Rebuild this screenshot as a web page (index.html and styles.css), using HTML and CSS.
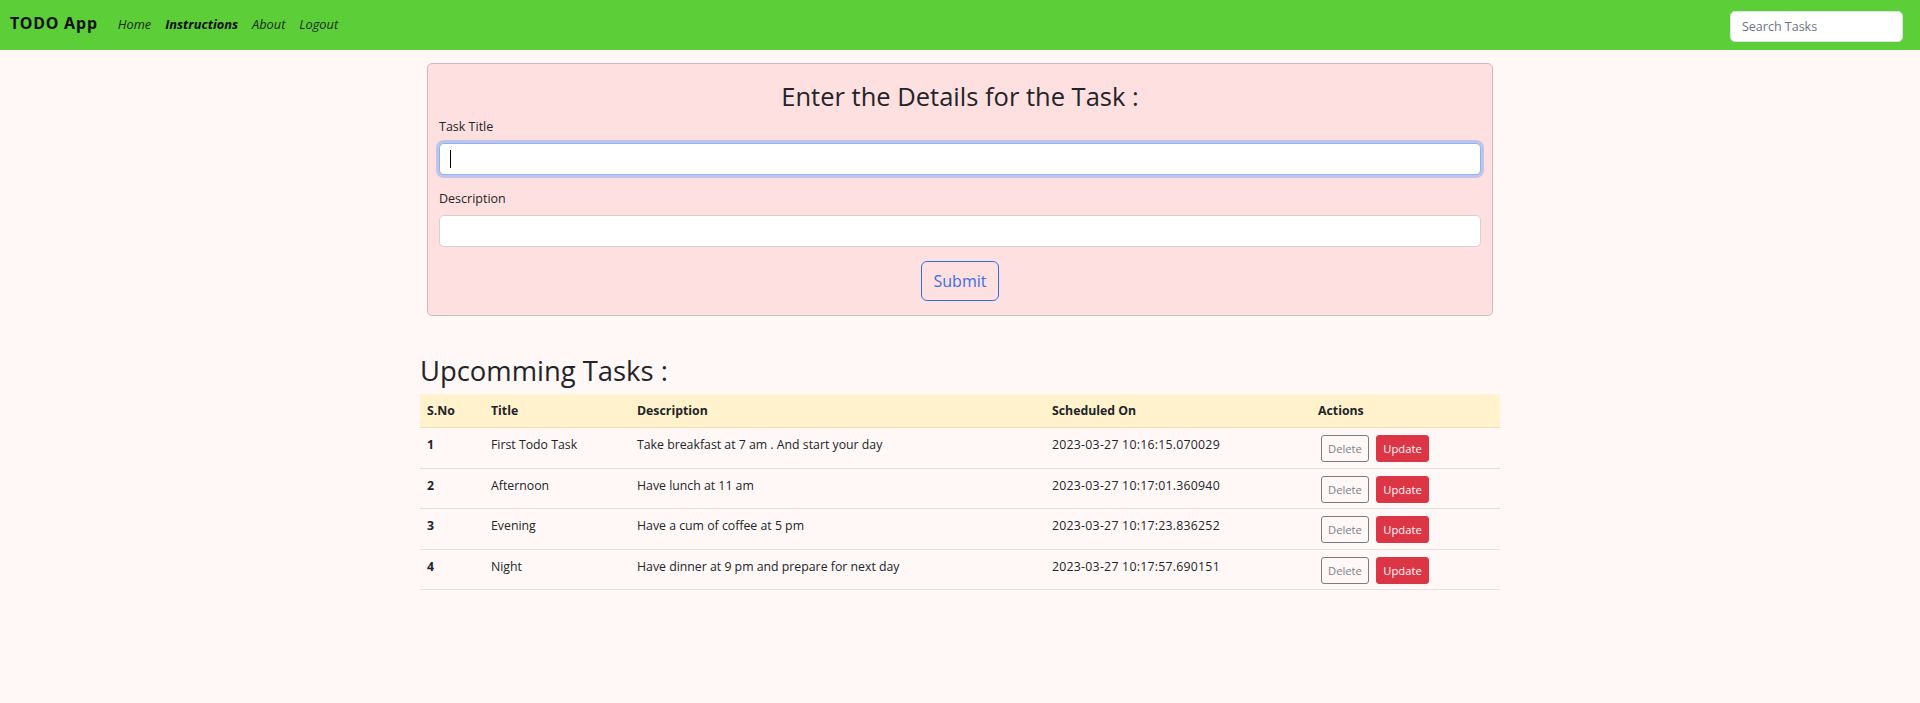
FILE: index.html
```html
<!DOCTYPE html>
<html lang="en">
<head>
<meta charset="utf-8">
<title>TODO App</title>
<link rel="stylesheet" href="styles.css">
</head>
<body>
<nav class="navbar">
  <div class="nav-left">
    <a class="brand" href="#">TODO App</a>
    <ul class="nav-links">
      <li><a href="#">Home</a></li>
      <li><a class="active" href="#">Instructions</a></li>
      <li><a href="#">About</a></li>
      <li><a href="#">Logout</a></li>
    </ul>
  </div>
  <form class="search">
    <input class="search-input" type="search" placeholder="Search Tasks">
  </form>
</nav>

<main class="container">
  <form class="task-form">
    <h3 class="form-title">Enter the Details for the Task :</h3>
    <div class="field">
      <label class="form-label" for="title">Task Title</label>
      <div class="input-wrap">
        <input class="form-control focused" id="title" type="text">
        <span class="caret"></span>
      </div>
    </div>
    <div class="field">
      <label class="form-label" for="desc">Description</label>
      <input class="form-control" id="desc" type="text">
    </div>
    <div class="submit-row">
      <button class="btn-submit" type="button">Submit</button>
    </div>
  </form>

  <h2 class="section-title">Upcomming Tasks :</h2>
  <table class="tasks">
    <colgroup>
      <col class="c-sno"><col class="c-title"><col class="c-desc"><col class="c-date"><col class="c-act">
    </colgroup>
    <thead>
      <tr><th>S.No</th><th>Title</th><th>Description</th><th>Scheduled On</th><th>Actions</th></tr>
    </thead>
    <tbody>
      <tr><th>1</th><td>First Todo Task</td><td>Take breakfast at 7 am . And start your day</td><td class="date">2023-03-27 10:16:15.070029</td><td class="acts"><div class="act-btns"><button class="btn-del">Delete</button><button class="btn-upd">Update</button></div></td></tr>
      <tr><th>2</th><td>Afternoon</td><td>Have lunch at 11 am</td><td class="date">2023-03-27 10:17:01.360940</td><td class="acts"><div class="act-btns"><button class="btn-del">Delete</button><button class="btn-upd">Update</button></div></td></tr>
      <tr><th>3</th><td>Evening</td><td>Have a cum of coffee at 5 pm</td><td class="date">2023-03-27 10:17:23.836252</td><td class="acts"><div class="act-btns"><button class="btn-del">Delete</button><button class="btn-upd">Update</button></div></td></tr>
      <tr><th>4</th><td>Night</td><td>Have dinner at 9 pm and prepare for next day</td><td class="date">2023-03-27 10:17:57.690151</td><td class="acts"><div class="act-btns"><button class="btn-del">Delete</button><button class="btn-upd">Update</button></div></td></tr>
    </tbody>
  </table>
</main>
</body>
</html>
```
FILE: styles.css
```css
* { box-sizing: border-box; }
html, body { margin: 0; padding: 0; }
body {
  background: #fff8f7;
  color: #212529;
  font-family: "Open Sans", "Noto Sans", sans-serif;
  font-size: 12.3px;
  line-height: 1.55;
}

/* navbar */
.navbar {
  height: 50px;
  background: #5bce38;
  display: flex;
  align-items: center;
  justify-content: space-between;
  padding: 0 17px 0 10px;
}
.nav-left { display: flex; align-items: center; }
.brand {
  font-family: "Noto Sans", sans-serif;
  font-weight: 700;
  font-size: 16px;
  letter-spacing: 0.8px;
  color: #111;
  text-decoration: none;
  margin-right: 20px;
  margin-top: -3px;
}
.nav-links { list-style: none; display: flex; margin: 0; padding: 0; gap: 14px; }
.nav-links a {
  font-style: italic;
  font-size: 12.8px;
  color: #1d2a1a;
  text-decoration: none;
}
.nav-links a.active { font-weight: 700; color: #0d0d0d; }
.search { margin-top: 2px; }
.search-input {
  width: 173px;
  height: 31px;
  border: 1px solid #dee2e6;
  border-radius: 5px;
  background: #fff;
  padding: 4px 11px;
  font-family: inherit;
  font-size: 12.5px;
  color: #212529;
}
.search-input::placeholder { color: #6c757d; }

/* layout */
.container { width: 1080px; margin: 0 auto; }

.task-form {
  margin: 13px 7px 0 7px;
  background: #ffe0e0;
  border: 1px solid #cbbcbc;
  border-radius: 5px;
  padding: 17px 11px 14px 11px;
}
.form-title {
  margin: 0 0 5px 0;
  text-align: center;
  font-size: 25.5px;
  font-weight: 500;
  line-height: 31px;
}
.field { margin-bottom: 14px; }
.form-label { display: block; margin-bottom: 7px; font-size: 12.5px; line-height: 19px; }
.input-wrap { position: relative; }
.form-control {
  display: block;
  width: 100%;
  height: 32px;
  border: 1px solid #d6d0d0;
  border-radius: 5px;
  background: #fff;
  padding: 4px 10px;
  font-family: inherit;
  font-size: 12.5px;
  outline: none;
}
.form-control.focused {
  border-color: #86b7fe;
  box-shadow: 0 0 0 3px rgba(13, 110, 253, 0.25);
}
.caret {
  position: absolute;
  left: 11px;
  top: 7px;
  width: 1px;
  height: 18px;
  background: #000;
}
.submit-row { display: flex; justify-content: center; margin-top: 13px; }
.btn-submit {
  height: 40px;
  padding: 0 12px;
  background: transparent;
  border: 1px solid #2f6fe6;
  border-radius: 6px;
  color: #3a6ee0;
  font-family: inherit;
  font-size: 16px;
}

.section-title {
  margin: 38px 0 6px 0;
  font-size: 27.4px;
  font-weight: 500;
  line-height: 34px;
}

/* table */
.tasks {
  width: 1080px;
  border-collapse: collapse;
  table-layout: fixed;
}
.c-sno { width: 64px; }
.c-title { width: 146px; }
.c-desc { width: 415px; }
.c-date { width: 266px; }
.c-act { width: 189px; }
.tasks th, .tasks td {
  text-align: left;
  vertical-align: top;
  padding: 7px 7px 5.5px 7px;
  line-height: 19px;
  font-size: 12.3px;
  border-bottom: 1px solid #e2dede;
}
.tasks thead th {
  background: #fff2cc;
  font-weight: 700;
  border-bottom: 1px solid #ece0b8;
  padding: 7px;
}
.tasks tbody th { font-weight: 700; }
.tasks td.date { letter-spacing: 0.25px; }
.tasks td.acts { padding-left: 10px; }
.act-btns { display: flex; gap: 7px; }
.btn-del, .btn-upd {
  height: 27px;
  border-radius: 3px;
  font-family: inherit;
  font-size: 11.2px;
  padding: 0 4px;
}
.btn-del {
  width: 48px;
  background: transparent;
  border: 1px solid #767d85;
  color: #7b8188;
}
.btn-upd {
  width: 53px;
  background: #dc3545;
  border: 1px solid #dc3545;
  color: #fff;
}
```
